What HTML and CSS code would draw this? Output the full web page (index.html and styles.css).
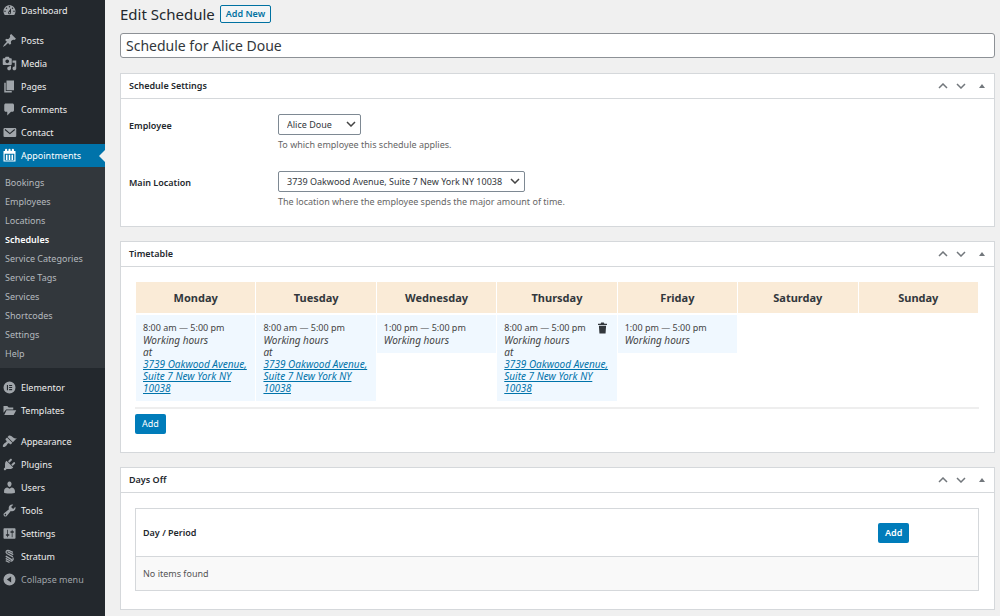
FILE: index.html
```html
<!DOCTYPE html>
<html lang="en">
<head>
<meta charset="utf-8">
<title>Edit Schedule</title>
<link rel="stylesheet" href="styles.css">
</head>
<body>
<svg class="sprite" aria-hidden="true">
  <symbol id="up" viewBox="0 0 10 6"><path d="M1 5l4-4 4 4" fill="none" stroke="currentColor" stroke-width="1.5"/></symbol>
  <symbol id="down" viewBox="0 0 10 6"><path d="M1 1l4 4 4-4" fill="none" stroke="currentColor" stroke-width="1.5"/></symbol>
  <symbol id="toggle" viewBox="0 0 6 4"><path d="M3 0l3 4H0z"/></symbol>
</svg>
<div class="layout">
  <nav class="sidebar" aria-label="Main menu">
    <ul class="menu">
      <li><a class="item item-first" href="#"><svg class="icon" viewBox="0 0 20 20"><path fill-rule="evenodd" d="M3.76 16h12.48c1.1-1.37 1.76-3.11 1.76-5 0-4.42-3.58-8-8-8s-8 3.58-8 8c0 1.89.66 3.63 1.76 5zM10 4c.55 0 1 .45 1 1s-.45 1-1 1-1-.45-1-1 .45-1 1-1zM6 6c.55 0 1 .45 1 1s-.45 1-1 1-1-.45-1-1 .45-1 1-1zm8 0c.55 0 1 .45 1 1s-.45 1-1 1-1-.45-1-1 .45-1 1-1zm-5.37 5.55L12 7v6c0 1.1-.9 2-2 2s-2-.9-2-2c0-.57.24-1.08.63-1.45zM4 10c.55 0 1 .45 1 1s-.45 1-1 1-1-.45-1-1 .45-1 1-1zm12 0c.55 0 1 .45 1 1s-.45 1-1 1-1-.45-1-1 .45-1 1-1zm-5 3c0-.55-.45-1-1-1s-1 .45-1 1 .45 1 1 1 1-.45 1-1z"/></svg>Dashboard</a></li>
    </ul>
    <ul class="menu">
      <li><a class="item" href="#"><svg class="icon" viewBox="0 0 20 20"><path d="M10.44 3.02l1.82-1.82 6.36 6.35-1.83 1.82c-1.05-.68-2.48-.57-3.41.36l-.75.75c-.92.93-1.04 2.35-.35 3.41l-1.83 1.82-2.41-2.41-2.8 2.79c-.42.42-3.38 2.71-3.8 2.29s1.86-3.39 2.28-3.81l2.79-2.79L4.1 9.36l1.83-1.82c1.05.69 2.48.57 3.4-.36l.75-.75c.93-.92 1.05-2.35.36-3.41z"/></svg>Posts</a></li>
      <li><a class="item" href="#"><svg class="icon" viewBox="0 0 20 20"><path fill-rule="evenodd" d="M13 11V4c0-.55-.45-1-1-1h-1.67L9 1H5L3.67 3H2c-.55 0-1 .45-1 1v7c0 .55.45 1 1 1h10c.55 0 1-.45 1-1zM7 4.5c1.38 0 2.5 1.12 2.5 2.5S8.38 9.5 7 9.5 4.5 8.38 4.5 7 5.62 4.5 7 4.5zM14 6h5v10.5c0 1.38-1.12 2.5-2.5 2.5S14 17.88 14 16.5s1.12-2.5 2.5-2.5c.17 0 .34.02.5.05V9h-3V6zm-4 8.05V13h2v3.5c0 1.38-1.12 2.5-2.5 2.5S7 17.88 7 16.5 8.12 14 9.5 14c.17 0 .34.02.5.05z"/></svg>Media</a></li>
      <li><a class="item" href="#"><svg class="icon" viewBox="0 0 20 20"><path d="M6 15V2h10v13H6zm-1 1h8v2H3V5h2v11z"/></svg>Pages</a></li>
      <li><a class="item" href="#"><svg class="icon" viewBox="0 0 20 20"><path d="M5 2h9c1.1 0 2 .9 2 2v7c0 1.1-.9 2-2 2h-2l-5 5v-5H5c-1.1 0-2-.9-2-2V4c0-1.1.9-2 2-2z"/></svg>Comments</a></li>
      <li><a class="item" href="#"><svg class="icon" viewBox="0 0 20 20"><rect x="2" y="4" width="17" height="12" rx="1.5"/><path d="M4 6l6.500 5.500L17 6" fill="none" stroke="#23282d" stroke-width="1.500"/></svg>Contact</a></li>
      <li><a class="item item-current" href="#"><svg class="icon" viewBox="0 0 20 20"><path fill-rule="evenodd" d="M4 4V2.500a1.500 1.500 0 0 1 3 0V4h1.500V2.500a1.500 1.500 0 0 1 3 0V4H13V2.500a1.500 1.500 0 0 1 3 0V4h2v14H2V4zM3.500 7.500v9h13v-9zM5.300 9h2v7h-2zm3.700 0h2v7H9zm3.700 0h2v7h-2z"/></svg>Appointments</a>
        <ul class="submenu">
          <li><a href="#">Bookings</a></li>
          <li><a href="#">Employees</a></li>
          <li><a href="#">Locations</a></li>
          <li><a class="sub-current" href="#">Schedules</a></li>
          <li><a href="#">Service Categories</a></li>
          <li><a href="#">Service Tags</a></li>
          <li><a href="#">Services</a></li>
          <li><a href="#">Shortcodes</a></li>
          <li><a href="#">Settings</a></li>
          <li><a href="#">Help</a></li>
        </ul>
      </li>
    </ul>
    <ul class="menu">
      <li><a class="item" href="#"><svg class="icon" viewBox="0 0 20 20"><path fill-rule="evenodd" d="M10 2a8 8 0 1 0 0 16 8 8 0 0 0 0-16zM6.500 6.500H8v7H6.500zm3 0h4V8h-4zm0 2.750h4v1.500h-4zm0 2.750h4v1.500h-4z"/></svg>Elementor</a></li>
      <li><a class="item" href="#"><svg class="icon" viewBox="0 0 20 20"><path d="M2 13V4h5l2 2h6v2.500H5.500zM3 16l3-6.500h13L15.500 16z"/></svg>Templates</a></li>
    </ul>
    <ul class="menu">
      <li><a class="item" href="#"><svg class="icon" viewBox="0 0 20 20"><path d="M14.480 11.060L7.410 3.990l1.500-1.500c.5-.56 2.300-.47 3.510.32 1.210.8 1.430 1.280 2.910 2.100 1.180.64 2.450 1.260 4.450.85zm-.71.71L6.700 4.700 4.930 6.470c-.39.39-.39 1.020 0 1.410l1.060 1.060c.39.39.39 1.030 0 1.420-.6.6-1.430 1.110-2.210 1.690-.35.26-.7.53-1.010.84C1.430 14.230.4 16.080 1.400 17.070c.99 1 2.840-.03 4.180-1.360.31-.31.58-.66.85-1.020.57-.78 1.080-1.610 1.690-2.210.39-.39 1.020-.39 1.410 0l1.060 1.060c.39.39 1.020.39 1.410 0z"/></svg>Appearance</a></li>
      <li><a class="item" href="#"><svg class="icon" viewBox="0 0 20 20"><path d="M13.110 4.360L9.870 7.600 8 5.730l3.240-3.240c.35-.34 1.050-.2 1.560.32.52.51.66 1.210.31 1.550zm-8 1.770l.91-1.120 9.010 9.010-1.190.84c-.71.71-2.630 1.160-3.820 1.160H6.140L4.900 17.260c-.59.59-1.540.59-2.120 0-.59-.58-.59-1.530 0-2.120l1.240-1.240v-3.880c0-1.130.4-3.190 1.090-3.890zm7.260 3.970l3.240-3.240c.34-.35 1.040-.21 1.550.31.52.51.66 1.210.31 1.550l-3.240 3.250z"/></svg>Plugins</a></li>
      <li><a class="item" href="#"><svg class="icon" viewBox="0 0 20 20"><path d="M10 9.250c-2.270 0-2.730-3.440-2.730-3.440C7 4.020 7.820 2 9.970 2c2.160 0 2.980 2.020 2.710 3.810 0 0-.41 3.440-2.680 3.440zm0 2.570L12.720 10c2.390 0 4.520 2.330 4.520 4.530v2.490s-3.650 1.130-7.240 1.130c-3.650 0-7.240-1.130-7.240-1.130v-2.490c0-2.250 1.940-4.480 4.470-4.480z"/></svg>Users</a></li>
      <li><a class="item" href="#"><svg class="icon" viewBox="0 0 20 20"><path fill-rule="evenodd" d="M16.680 9.770c-1.340 1.340-3.300 1.670-4.950.99l-5.410 6.520c-.99.99-2.590.99-3.580 0s-.99-2.590 0-3.570l6.520-5.420c-.68-1.650-.35-3.610.99-4.950 1.280-1.280 3.120-1.620 4.720-1.060l-2.890 2.890 2.820 2.820 2.860-2.870c.53 1.580.18 3.390-1.080 4.650zM3.810 16.210c.4.39 1.040.39 1.430 0 .4-.4.4-1.040 0-1.430-.39-.4-1.030-.4-1.430 0-.39.39-.39 1.030 0 1.430z"/></svg>Tools</a></li>
      <li><a class="item" href="#"><svg class="icon" viewBox="0 0 20 20"><path fill-rule="evenodd" d="M18 16V4c0-.55-.45-1-1-1H3c-.55 0-1 .45-1 1v12c0 .55.45 1 1 1h14c.55 0 1-.45 1-1zM8 11h1c.55 0 1 .45 1 1s-.45 1-1 1H8v1.500c0 .28-.22.5-.5.5s-.5-.22-.5-.5V13H6c-.55 0-1-.45-1-1s.45-1 1-1h1V5.500c0-.28.22-.5.5-.5s.5.22.5.5V11zm5-2h-1c-.55 0-1-.45-1-1s.45-1 1-1h1V5.500c0-.28.22-.5.5-.5s.5.22.5.5V7h1c.55 0 1 .45 1 1s-.45 1-1 1h-1v5.500c0 .28-.22.5-.5.5s-.5-.22-.5-.5V9z"/></svg>Settings</a></li>
      <li><a class="item" href="#"><svg class="icon" viewBox="0 0 20 20"><path d="M14.500 4.500L9.500 2C6 1 4 4 6.500 6l8 4.500M7.500 3.500l7.500 4M5 9.500l8.500 5M5 12.500c2.500 1.500 3.500 2 5.500 3.200 3 1.300 5.500-1.200 4-4.200M5 15.500l5 2.500" fill="none" stroke="currentColor" stroke-width="1.600"/></svg>Stratum</a></li>
      <li><button class="item item-muted" type="button"><svg class="icon" viewBox="0 0 20 20"><path fill-rule="evenodd" d="M10 2a8 8 0 1 0 0 16 8 8 0 0 0 0-16zm2.200 4v8L6.500 10z"/></svg>Collapse menu</button></li>
    </ul>
  </nav>

  <main class="content">
    <header class="page-head">
      <h1>Edit Schedule</h1>
      <a class="add-new" href="#">Add New</a>
    </header>
    <input class="title-input" type="text" aria-label="Schedule title" value="Schedule for Alice Doue">

    <section class="box">
      <div class="box-head">
        <h2>Schedule Settings</h2>
        <div class="box-tools">
          <button type="button" aria-label="Move up"><svg class="chev"><use href="#up"/></svg></button>
          <button type="button" aria-label="Move down"><svg class="chev"><use href="#down"/></svg></button>
          <button class="tool-toggle" type="button" aria-label="Toggle panel"><svg class="tri"><use href="#toggle"/></svg></button>
        </div>
      </div>
      <div class="fields">
        <div class="field">
          <label for="employee">Employee</label>
          <div class="control">
            <span class="select-wrap"><select class="select select-short" id="employee"><option>Alice Doue</option></select><svg class="chev select-arrow"><use href="#down"/></svg></span>
            <p class="hint">To which employee this schedule applies.</p>
          </div>
        </div>
        <div class="field">
          <label for="location">Main Location</label>
          <div class="control">
            <span class="select-wrap"><select class="select select-long" id="location"><option>3739 Oakwood Avenue, Suite 7 New York NY 10038</option></select><svg class="chev select-arrow"><use href="#down"/></svg></span>
            <p class="hint">The location where the employee spends the major amount of time.</p>
          </div>
        </div>
      </div>
    </section>

    <section class="box">
      <div class="box-head">
        <h2>Timetable</h2>
        <div class="box-tools">
          <button type="button" aria-label="Move up"><svg class="chev"><use href="#up"/></svg></button>
          <button type="button" aria-label="Move down"><svg class="chev"><use href="#down"/></svg></button>
          <button class="tool-toggle" type="button" aria-label="Toggle panel"><svg class="tri"><use href="#toggle"/></svg></button>
        </div>
      </div>
      <div class="box-body">
        <table class="timetable">
          <thead>
            <tr><th>Monday</th><th>Tuesday</th><th>Wednesday</th><th>Thursday</th><th>Friday</th><th>Saturday</th><th>Sunday</th></tr>
          </thead>
          <tbody>
            <tr>
              <td><div class="slot">8:00 am — 5:00 pm<em>Working hours<br>at<br><a href="#">3739 Oakwood Avenue, Suite 7 New York NY 10038</a></em></div></td>
              <td><div class="slot">8:00 am — 5:00 pm<em>Working hours<br>at<br><a href="#">3739 Oakwood Avenue, Suite 7 New York NY 10038</a></em></div></td>
              <td><div class="slot">1:00 pm — 5:00 pm<em>Working hours</em></div></td>
              <td><div class="slot">8:00 am — 5:00 pm<em>Working hours<br>at<br><a href="#">3739 Oakwood Avenue, Suite 7 New York NY 10038</a></em><button class="trash" type="button" aria-label="Delete"><svg viewBox="0 0 10 12"><path d="M3 1.200C3 .5 3.500 0 4.200 0h1.600C6.500 0 7 .5 7 1.200h3v1.600H0V1.200zM1 3.600h8L8.400 12H1.600z"/></svg></button></div></td>
              <td><div class="slot">1:00 pm — 5:00 pm<em>Working hours</em></div></td>
              <td></td>
              <td></td>
            </tr>
          </tbody>
        </table>
        <div class="table-actions"><button class="primary" type="button">Add</button></div>
      </div>
    </section>

    <section class="box">
      <div class="box-head">
        <h2>Days Off</h2>
        <div class="box-tools">
          <button type="button" aria-label="Move up"><svg class="chev"><use href="#up"/></svg></button>
          <button type="button" aria-label="Move down"><svg class="chev"><use href="#down"/></svg></button>
          <button class="tool-toggle" type="button" aria-label="Toggle panel"><svg class="tri"><use href="#toggle"/></svg></button>
        </div>
      </div>
      <div class="box-body days-body">
        <table class="days">
          <thead>
            <tr><th>Day / Period</th><th class="days-action"><button class="primary primary-bold" type="button">Add</button></th></tr>
          </thead>
          <tbody>
            <tr><td colspan="2">No items found</td></tr>
          </tbody>
        </table>
      </div>
    </section>
  </main>
</div>
</body>
</html>
```
FILE: styles.css
```css
* { box-sizing: border-box; }

body {
  margin: 0;
  background: #f0f0f0;
  color: #444;
  font: 9px/12px "Noto Sans", "Open Sans", sans-serif;
}

ul, h1, h2, p { margin: 0; padding: 0; }
ul { list-style: none; }

button, input, select { font: inherit; color: inherit; }
button { border: 0; background: none; padding: 0; }

.sprite { position: absolute; width: 0; height: 0; }

.layout { display: flex; min-height: 100vh; }

/* Sidebar */
.sidebar {
  flex: 0 0 105px;
  background: #23282d;
}
.menu + .menu { margin-top: 8px; }
.item {
  display: flex;
  align-items: center;
  gap: 4px;
  width: 100%;
  height: 23px;
  padding-left: 2px;
  color: #eee;
  text-decoration: none;
}
.item-first { height: 21px; }
.icon {
  flex: none;
  width: 15px;
  height: 15px;
  fill: #a0a5aa;
  color: #a0a5aa;
}
.item-current {
  position: relative;
  background: #0073aa;
  color: #fff;
}
.item-current .icon { fill: #fff; }
.item-current::after {
  content: "";
  position: absolute;
  right: 0;
  border: 6px solid transparent;
  border-right-color: #f0f0f0;
  border-left-width: 0;
}
.item-muted { color: #a0a5aa; }

.submenu {
  padding: 6px 0 5px;
  background: #32373c;
}
.submenu a {
  display: block;
  padding-left: 5px;
  color: #b4b9be;
  line-height: 19px;
  text-decoration: none;
}
.submenu .sub-current { color: #fff; font-weight: 600; }

/* Page heading */
.content {
  flex: 1;
  min-width: 0;
  padding: 4px 5px 7px 15px;
}
.page-head {
  display: flex;
  align-items: center;
  gap: 5px;
  height: 19px;
}
h1 {
  color: #23282d;
  font-size: 15px;
  font-weight: 400;
}
.add-new {
  height: 18px;
  padding: 0 5px;
  border: 1px solid #0071a1;
  border-radius: 2px;
  background: #f3f5f6;
  color: #0071a1;
  font-weight: 600;
  line-height: 16px;
  text-decoration: none;
}
.title-input {
  display: block;
  width: 100%;
  height: 25px;
  margin-top: 10px;
  padding: 0 5px;
  border: 1px solid #8d9196;
  border-radius: 3px;
  background: #fff;
  color: #32373c;
  font-size: 14px;
}

/* Panels */
.box {
  margin-top: 14px;
  border: 1px solid #d5d8db;
  background: #fff;
}
.title-input + .box { margin-top: 15px; }
.box-head {
  display: flex;
  align-items: center;
  justify-content: space-between;
  height: 25px;
  padding: 0 8px;
  border-bottom: 1px solid #d5d8db;
}
h2 {
  color: #23282d;
  font-size: 9px;
  font-weight: 600;
}
.box-tools { display: flex; align-items: center; gap: 8px; color: #72777c; }
.box-tools button { display: flex; }
.chev { width: 10px; height: 6px; }
.tri { width: 6px; height: 4px; fill: #72777c; }
.tool-toggle { padding: 0 1px 0 5px; }

/* Settings fields */
.fields {
  display: grid;
  gap: 20px;
  padding: 15px 8px 18px;
}
.field {
  display: grid;
  grid-template-columns: 149px 1fr;
}
.field label {
  padding-top: 6px;
  color: #23282d;
  font-weight: 600;
}
.select-wrap { display: inline-flex; position: relative; }
.select {
  appearance: none;
  height: 21px;
  padding: 0 8px;
  border: 1px solid #7e8993;
  border-radius: 2px;
  background: #fff;
  color: #32373c;
}
.select-short { width: 83px; }
.select-long { width: 247px; }
.select-arrow {
  position: absolute;
  right: 5px;
  top: 7px;
  color: #444;
  pointer-events: none;
}
.hint { margin-top: 4px; color: #666; }

/* Timetable */
.box-body { padding: 13px 15px 18px 14px; }
.timetable {
  width: 100%;
  table-layout: fixed;
  border-spacing: 1px 2px;
  border-bottom: 2px solid #eee;
  padding-bottom: 4px;
}
.timetable th {
  height: 31px;
  padding: 0;
  background: #faebd7;
  color: #32373c;
  font-size: 11px;
  font-weight: 700;
}
.timetable td { padding: 0; vertical-align: top; }
.slot {
  position: relative;
  padding: 7px;
  background: #f0f8ff;
}
.slot em { display: block; font-size: 10px; }
.slot a { color: #0073aa; }
.trash {
  position: absolute;
  top: 7px;
  right: 10px;
  width: 9px;
  height: 12px;
}
.trash svg { display: block; width: 9px; height: 12px; fill: #32373c; }
.table-actions { display: flex; margin-top: 5px; }
.primary {
  height: 20px;
  padding: 0 7px;
  border-radius: 2px;
  background: #007cba;
  color: #fff;
}
.primary-bold { font-weight: 600; }

/* Days off */
.days-body { padding-top: 15px; }
.days {
  width: 100%;
  border: 1px solid #d5d8db;
  border-spacing: 0;
}
.days th {
  height: 48px;
  padding: 0 7px;
  border-bottom: 1px solid #d5d8db;
  color: #23282d;
  font-weight: 600;
  text-align: left;
}
.days .days-action { width: 107px; }
.days td {
  height: 33px;
  padding: 0 7px;
  background: #f9f9f9;
  color: #555;
}
```
